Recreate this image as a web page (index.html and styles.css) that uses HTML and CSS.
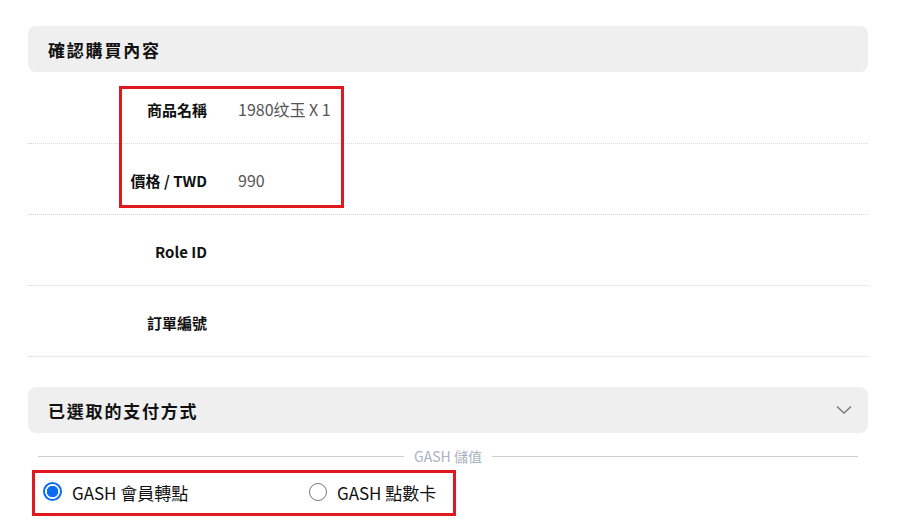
FILE: index.html
```html
<!DOCTYPE html>
<html>
<head>
<meta name="viewport" content="width=device-width, initial-scale=1">
<link rel="stylesheet" href="styles.css">
</head>
<body>
<div class="page">

  <div class="section-head">確認購買內容</div>

  <div class="info">
    <div class="row"><div class="label">商品名稱</div><div class="value">1980纹玉 X 1</div></div>
    <div class="row"><div class="label">價格 / TWD</div><div class="value">990</div></div>
    <div class="row"><div class="label">Role ID</div><div class="value"></div></div>
    <div class="row"><div class="label">訂單編號</div><div class="value"></div></div>
    <!-- highlight box -->
    <div class="mark mark-info"></div>
  </div>

  <div class="section-head pay-head">
    <span>已選取的支付方式</span>
    <svg class="chevron" width="16" height="10" viewBox="0 0 16 10"><path d="M1 1.5 L8 8 L15 1.5" fill="none" stroke="#777" stroke-width="1.3"/></svg>
  </div>

  <div class="divider"><span>GASH 儲值</span></div>

  <div class="options">
    <label class="opt"><span class="radio checked"></span>GASH 會員轉點</label>
    <label class="opt"><span class="radio"></span>GASH 點數卡</label>
    <div class="mark mark-opts"></div>
  </div>

</div>
</body>
</html>
```

FILE: styles.css
```css
body {
  margin: 0;
  background: #fff;
  font-family: "Noto Sans CJK TC", "Noto Sans", sans-serif;
  color: #111;
}

.page {
  width: 840px;
  padding: 26px 0 0 28px;
}

.section-head {
  height: 46px;
  background: #efefef;
  border-radius: 8px;
  padding: 0 20px;
  display: flex;
  align-items: center;
  justify-content: space-between;
  font-size: 17px;
  font-weight: bold;
  letter-spacing: 1.8px;
}

/* info table */
.info {
  position: relative;
  margin-top: 1px;
}

.row {
  display: grid;
  grid-template-columns: 179px 1fr;
  column-gap: 31px;
  align-items: center;
  height: 70px;
  border-bottom: 1px dotted #d6d6d6;
  font-size: 15px;
}

.label {
  text-align: right;
  font-weight: bold;
  padding-top: 2px;
}

.value {
  color: #555;
  font-size: 16px;
  padding-top: 1px;
}

/* red annotation boxes */
.mark {
  position: absolute;
  border: 3px solid #e0191f;
}

.mark-info {
  left: 91px;
  top: 13px;
  width: 219px;
  height: 116px;
}

.mark-opts {
  left: 4px;
  top: 0;
  width: 418px;
  height: 40px;
}

.pay-head {
  margin-top: 30px;
}

.chevron {
  margin-right: -4px;
}

/* divider with label */
.divider {
  display: flex;
  align-items: center;
  margin: 12px 10px 0 10px;
  height: 22px;
  color: #a9b2bf;
  font-size: 14px;
}

.divider::before,
.divider::after {
  content: "";
  flex: 1;
  border-top: 1px solid #cfcfcf;
}

.divider span {
  margin: 0 10px;
}

/* radio options */
.options {
  position: relative;
  display: flex;
  height: 46px;
  margin-top: 3px;
  padding-left: 15px;
  font-size: 17px;
  color: #111;
}

.opt {
  display: flex;
  align-items: center;
  width: 266px;
  padding-bottom: 1px;
}

.radio {
  width: 16px;
  height: 16px;
  border: 1.5px solid #767676;
  border-radius: 50%;
  margin-right: 10px;
  box-sizing: content-box;
  position: relative;
  top: -1px;
}

.radio.checked {
  border: 2px solid #0b6df0;
  width: 15px;
  height: 15px;
  background: radial-gradient(circle, #0b6df0 0 5.5px, #fff 6px);
}
```
